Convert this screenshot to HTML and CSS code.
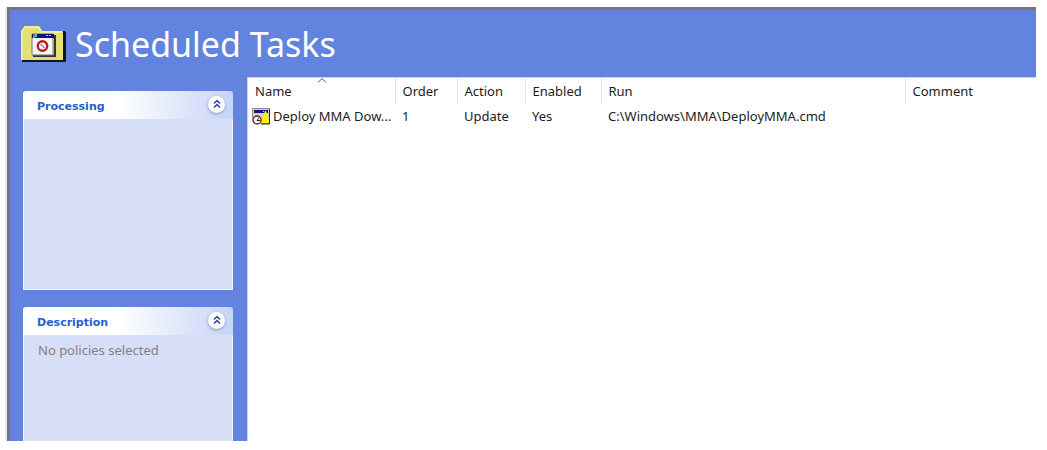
FILE: index.html
```html
<!DOCTYPE html>
<html lang="en">
<head>
<meta charset="utf-8">
<title>Scheduled Tasks</title>
<link rel="stylesheet" href="styles.css">
</head>
<body>
<main class="window">
  <header class="banner">
    <svg class="banner-icon" viewBox="0 0 46 38" aria-hidden="true">
      <defs>
        <pattern id="dither" width="2" height="2" patternUnits="userSpaceOnUse">
          <path d="M0 0h2v2H0z" fill="#e2dd4e"/><path d="M0 0h1v1H0zM1 1h1v1H1z" fill="#e9e67e"/>
        </pattern>
      </defs>
      <path d="M1 37V34h41V6h2l1 2v29z" fill="#15151c"/>
      <path d="M0 35V6l4-5h14l3 5h20l1 1v28z" fill="url(#dither)"/>
      <path d="M1 34V6l3-4h13l4 5h20" fill="none" stroke="#f7f4b0" stroke-width="1.5"/>
      <path d="M12 31h22V10" fill="none" stroke="#333" stroke-width="2"/>
      <path d="M11 9h21v21H11z" fill="#f6f6f6" stroke="#77776a"/>
      <path d="M11 9h22v4H11z" fill="#10107c"/>
      <path d="M12 9h2v2h-2z" fill="#e33"/><path d="M14 9h2v3h-2z" fill="#3cb"/><path d="M12 11h2v2h-2z" fill="#3c5"/>
      <path d="M25 10h2v1h-2zm3 0h2v1h-2z" fill="#bbc"/>
      <circle cx="21.500" cy="21" r="4.700" fill="#fff" stroke="#c3161c" stroke-width="2.400"/>
      <path d="M19.500 19l4 4" stroke="#7484c8" stroke-width="1.500"/>
    </svg>
    <h1 class="banner-title">Scheduled Tasks</h1>
  </header>
  <div class="content">
    <aside class="sidebar">
      <section class="panel">
        <div class="panel-head">
          <h2 class="panel-title">Processing</h2>
          <button class="collapse" type="button" aria-label="Collapse Processing">
            <svg class="chevrons" viewBox="0 0 12 12" aria-hidden="true"><path d="M3 5.500l3-3 3 3M3 9.500l3-3 3 3"/></svg>
          </button>
        </div>
        <div class="panel-body"></div>
      </section>
      <section class="panel panel-last">
        <div class="panel-head">
          <h2 class="panel-title">Description</h2>
          <button class="collapse" type="button" aria-label="Collapse Description">
            <svg class="chevrons" viewBox="0 0 12 12" aria-hidden="true"><path d="M3 5.500l3-3 3 3M3 9.500l3-3 3 3"/></svg>
          </button>
        </div>
        <div class="panel-body">No policies selected</div>
      </section>
    </aside>
    <div class="list">
      <table class="tasks">
        <colgroup>
          <col class="col-name"><col class="col-order"><col class="col-action"><col class="col-enabled"><col class="col-run"><col>
        </colgroup>
        <thead>
          <tr>
            <th scope="col" class="sorted" aria-sort="ascending">Name<svg class="sort-mark" viewBox="0 0 10 5" aria-hidden="true"><path d="M1 4.500l4-4 4 4"/></svg></th>
            <th scope="col">Order</th>
            <th scope="col">Action</th>
            <th scope="col">Enabled</th>
            <th scope="col">Run</th>
            <th scope="col">Comment</th>
          </tr>
        </thead>
        <tbody>
          <tr>
            <td class="name-cell"><div class="name">
              <svg class="task-icon" viewBox="0 0 19 17" aria-hidden="true">
                <path d="M0 0h18v16H0z" fill="#8c8c8c"/>
                <path d="M1 1h16v14H1z" fill="#d0d0d0"/>
                <path d="M2 2h14v3H2z" fill="#15157e"/>
                <path d="M11 3h1v1h-1zm2 0h1v1h-1z" fill="#ddd"/>
                <path d="M0 10h9v6H0z" fill="#fff"/>
                <path d="M17.500 1v15H9" fill="none" stroke="#222"/>
                <path d="M9 15v-2l3-7 1-3h1l1 3 2 7v2z" fill="#fff200"/>
                <circle cx="5" cy="12" r="4" fill="#fff" stroke="#7c1e22" stroke-width="1.400"/>
                <path d="M5 12.500h3M5 12.500l2-3" fill="none" stroke="#222"/>
              </svg>
              <span>Deploy MMA Dow...</span>
            </div></td>
            <td>1</td>
            <td>Update</td>
            <td>Yes</td>
            <td>C:\Windows\MMA\DeployMMA.cmd</td>
            <td></td>
          </tr>
        </tbody>
      </table>
    </div>
  </div>
</main>
</body>
</html>
```
FILE: styles.css
```css
* { box-sizing: border-box; }

body {
  margin: 0;
  padding: 7px 11px 9px 7px;
  height: 100vh;
  background: #fff;
  color: #1c1c1c;
  font: 13px/18px "Noto Sans", "Open Sans", sans-serif;
}

.window {
  display: flex;
  flex-direction: column;
  height: 100%;
  border-top: 3px solid #747678;
  border-left: 3px solid #747678;
  background: #6284df;
  box-shadow: -2px 0 0 #e8e8e8;
}

.banner {
  display: flex;
  align-items: center;
  gap: 8px;
  height: 67px;
  padding: 0 11px;
  flex: none;
}
.banner-icon { width: 46px; height: 38px; }
.banner-title {
  margin: 0;
  color: #fff;
  font-size: 34px;
  font-weight: 400;
  line-height: 40px;
}

.content { display: flex; flex: 1; min-height: 0; }

.sidebar {
  display: flex;
  flex-direction: column;
  gap: 17px;
  flex: 0 0 237px;
  padding: 14px 14px 0 13px;
}
.panel {
  display: flex;
  flex-direction: column;
  flex: 0 0 199px;
}
.panel-last { flex: 1 1 0; min-height: 0; }
.panel-head {
  display: flex;
  align-items: center;
  justify-content: space-between;
  height: 28px;
  padding: 0 8px 2px 14px;
  border-radius: 3px 3px 0 0;
  background: linear-gradient(90deg, #fff 45%, #c7d4f7);
}
.panel-title {
  margin: 0;
  padding-top: 6px;
  color: #2560d0;
  font: bold 11px/16px "DejaVu Sans", sans-serif;
}
.collapse {
  display: grid;
  place-items: center;
  width: 17px;
  height: 17px;
  padding: 0;
  border: 0;
  border-radius: 50%;
  background: #fff;
  box-shadow: 0 1px 3px #8593c4;
}
.chevrons { width: 12px; height: 12px; fill: none; stroke: #1c46a8; stroke-width: 1.5; }
.panel-body {
  flex: 1;
  padding: 6px 14px;
  border: 1px solid #f0f4ff;
  border-top: 0;
  background: #d7def8;
  color: #808285;
}
.panel-last .panel-body { border-bottom: 0; }

.list {
  flex: 1;
  min-width: 0;
  border-top: 1px solid #c5d3f5;
  border-left: 1px solid #c5d3f5;
  background: #fff;
}
.tasks { width: 100%; border-collapse: collapse; table-layout: fixed; }
.col-name { width: 147px; }
.col-order { width: 62px; }
.col-action { width: 68px; }
.col-enabled { width: 76px; }
.col-run { width: 304px; }
.tasks th, .tasks td {
  padding: 0 0 0 7px;
  font-weight: 400;
  text-align: left;
  white-space: nowrap;
}
.tasks th { height: 26px; padding-bottom: 1px; border-right: 1px solid #e6e6e6; }
.tasks th:last-child { border-right: 0; }
.tasks td { height: 24px; }
.tasks td.name-cell { padding-left: 4px; }
.sorted { position: relative; }
.sort-mark {
  position: absolute;
  top: 0;
  left: 69px;
  width: 10px;
  height: 5px;
  fill: none;
  stroke: #555;
}
.name { display: flex; align-items: center; gap: 2px; }
.task-icon { flex: none; width: 19px; height: 17px; }
```
